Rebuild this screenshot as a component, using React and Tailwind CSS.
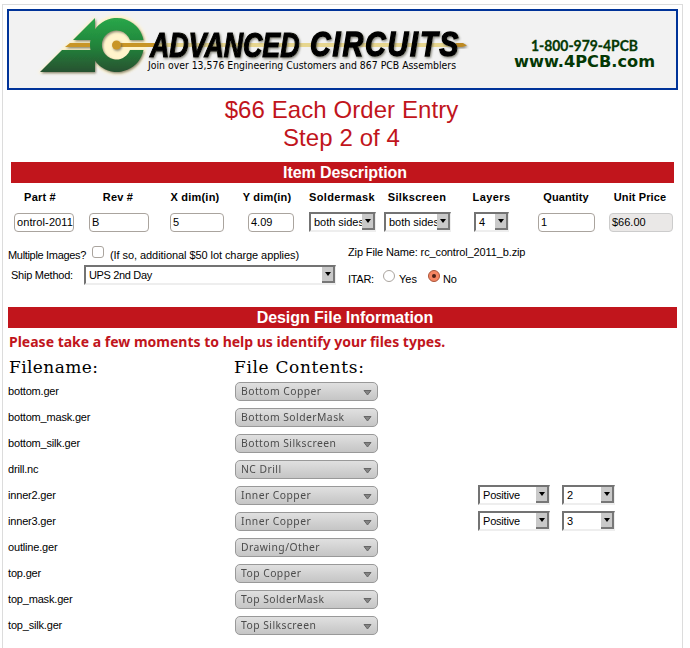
import React from "react";

const SANS = "font-['Liberation_Sans',Arial,sans-serif]";

const headings = [
  ["Part #", "w-[74px]"],
  ["Rev #", "w-[82px]"],
  ["X dim(in)", "w-[72px]"],
  ["Y dim(in)", "w-[72px]"],
  ["Soldermask", "w-[78px] tracking-[0.35px]"],
  ["Silkscreen", "w-[72px] tracking-[0.35px]"],
  ["Layers", "w-[77px] tracking-[0.4px]"],
  ["Quantity", "w-[72px] tracking-[0.1px]"],
  ["Unit Price", "w-[76px] tracking-[0.1px]"],
];

const files = [
  ["bottom.ger", "Bottom Copper"],
  ["bottom_mask.ger", "Bottom SolderMask"],
  ["bottom_silk.ger", "Bottom Silkscreen"],
  ["drill.nc", "NC Drill"],
  ["inner2.ger", "Inner Copper", "2"],
  ["inner3.ger", "Inner Copper", "3"],
  ["outline.ger", "Drawing/Other"],
  ["top.ger", "Top Copper"],
  ["top_mask.ger", "Top SolderMask"],
  ["top_silk.ger", "Top Silkscreen"],
];

function Logo() {
  return (
    <svg width="667" height="77" viewBox="9 11 667 77" className="block">
      <defs>
        <linearGradient id="green" x1="0" y1="17" x2="0" y2="73" gradientUnits="userSpaceOnUse">
          <stop offset="0" stopColor="#2aa84a" />
          <stop offset="0.5" stopColor="#21853b" />
          <stop offset="1" stopColor="#285030" />
        </linearGradient>
        <filter id="soft" x="-20%" y="-20%" width="140%" height="150%">
          <feGaussianBlur stdDeviation="1.6" />
        </filter>
        <filter id="shade" x="-10%" y="-20%" width="120%" height="150%">
          <feDropShadow dx="1" dy="1.3" stdDeviation="0.8" floodColor="#555544" floodOpacity="0.7" />
        </filter>
      </defs>
      <g fill="#fff4cc" filter="url(#soft)">
        <path d="M71 41 L95 16 V73 H38 L65 46Z" />
        <circle cx="117" cy="45" r="29.500" />
      </g>
      <path d="M117 43 H155 V47 H117Z" fill="#c89527" />
      <g filter="url(#shade)">
        <path d="M73 40 L95 18 V40Z M62 50 H95 V72 H40Z" fill="url(#green)" />
        <path d="M65 47 L70 43 H91 V47Z" fill="#c89527" />
        <path
          d="M143.500 40 A27 27 0 1 0 143.500 50 H130 A14.500 14.500 0 1 1 130 40Z"
          fill="url(#green)"
        />
        <circle cx="116.500" cy="45" r="4.500" fill="#c89527" />
      </g>
      <path d="M155 43 H459 V47 H155Z" fill="#e7d68f" />
      <path d="M456 43 H463 L467 45.500 L462 47 H456Z" fill="#bd8a20" filter="url(#shade)" />
      <g
        fontFamily="'Liberation Sans Narrow','Liberation Sans',Arial,sans-serif"
        fontWeight="700"
        fontStyle="italic"
        stroke="#000"
        filter="url(#shade)"
      >
        <text transform="translate(150 57) scale(0.74 1)" fontSize="35" strokeWidth="1.200" textLength="202" lengthAdjust="spacingAndGlyphs">ADVANCED</text>
        <text transform="translate(310 56) scale(0.82 1)" fontSize="35" strokeWidth="1.400" textLength="181" lengthAdjust="spacing">CIRCUITS</text>
      </g>
      <text x="148" y="69" fontSize="10" fontFamily="'DejaVu Sans',Verdana,sans-serif" textLength="308" lengthAdjust="spacingAndGlyphs">
        Join over 13,576 Engineering Customers and 867 PCB Assemblers
      </text>
      <text x="531" y="51" fontSize="15" fontWeight="700" fill="#043804" stroke="#043804" strokeWidth="0.300" fontFamily="Lato,sans-serif" textLength="107" lengthAdjust="spacingAndGlyphs">
        1-800-979-4PCB
      </text>
      <text x="514" y="67" fontSize="15" fontWeight="700" fill="#043804" fontFamily="'DejaVu Sans',Verdana,sans-serif" textLength="141" lengthAdjust="spacingAndGlyphs">
        www.4PCB.com
      </text>
    </svg>
  );
}

function TextBox({ children, className, tone = "border-[#aaa49e] bg-white" }) {
  return (
    <div className={`flex h-[19px] items-center overflow-hidden rounded-[4px] border px-[2px] whitespace-nowrap ${tone} ${className}`}>
      {children}
    </div>
  );
}

function Select({ children, className }) {
  return (
    <div className={`flex h-5 border-t-2 border-r border-b-2 border-l-2 border-t-[#737373] border-r-[#eee] border-b-[#eee] border-l-[#737373] bg-white ${className}`}>
      <div className="min-w-0 flex-1 overflow-hidden pl-[3px] leading-[16px] whitespace-nowrap">{children}</div>
      <div className="flex h-4 w-[13px] shrink-0 items-center justify-center border-r-2 border-b-2 border-[#777] bg-[#c9c9c9]">
        <svg width="6" height="4" viewBox="0 0 6 4">
          <path d="M0 0H6L3 4Z" fill="#000" />
        </svg>
      </div>
    </div>
  );
}

function PillSelect({ children }) {
  return (
    <div className="flex h-[19px] w-[143px] items-center justify-between rounded-[5px] border border-[#999] bg-linear-to-b from-[#e0e0e0] to-[#c5c5c5] pr-[5px] pl-[5px] font-['Noto_Sans','Open_Sans',sans-serif] text-[11.5px] text-[#4c4c4c]">
      <span className="origin-left scale-x-[0.9] tracking-[0.5px] whitespace-nowrap">{children}</span>
      <svg width="9" height="6" viewBox="0 0 9 6" className="mt-[3px] shrink-0">
        <path d="M1 0.500H8L4.500 5Z" fill="#858585" stroke="#666" />
      </svg>
    </div>
  );
}

function Bar({ children, className }) {
  return (
    <div className={`h-[21px] bg-[#c1151c] text-center text-[16px] leading-[21px] font-bold text-white ${className}`}>
      {children}
    </div>
  );
}

export default function App() {
  return (
    <div className={`h-[648px] w-[690px] overflow-hidden bg-white pt-1 pl-[2px] text-[11px] text-black ${SANS}`}>
      <div className="h-[660px] w-[681px] border border-[#dcdcdc]">
        <div className="mt-1 ml-1 h-[81px] w-[671px] border-2 border-[#003399] bg-[#f2f2f2]">
          <Logo />
        </div>

        <div className="mt-[6px] w-[677px] text-center text-[24px] leading-[28px] tracking-[0.08px] text-[#c1151c]">
          <div>$66 Each Order Entry</div>
          <div>Step 2 of 4</div>
        </div>

        <Bar className="mt-[10px] ml-2 w-[663px] pl-[5px] tracking-[-0.1px]">Item Description</Bar>

        <div className="mt-[7px] flex h-[15px] leading-[15px] font-bold tracking-[0.2px]">
          {headings.map(([label, width]) => (
            <div key={label} className={`shrink-0 text-center whitespace-nowrap ${width}`}>{label}</div>
          ))}
        </div>

        <div className="mt-[7px] flex h-5 items-end pl-[11px]">
          <TextBox className="w-[60px] tracking-[0.1px]">ontrol-2011</TextBox>
          <TextBox className="ml-[15px] w-[60px]">B</TextBox>
          <TextBox className="ml-[21px] w-[54px]">5</TextBox>
          <TextBox className="ml-6 w-[46px]">4.09</TextBox>
          <Select className="ml-[15px] w-[67px] tracking-[-0.02px]">both sides</Select>
          <Select className="ml-2 w-[67px] tracking-[-0.02px]">both sides</Select>
          <Select className="ml-[23px] w-[35px]">4</Select>
          <TextBox className="ml-[29px] w-[57px]">1</TextBox>
          <TextBox className="ml-[14px] w-[64px]" tone="border-[#ccc] bg-[#eae8e7]">$66.00</TextBox>
        </div>

        <div className="mt-[13px] flex pl-[5px]">
          <div className="w-[340px]">
            <div className="flex h-5 items-start leading-[20px]">
              <span className="w-[78px] tracking-[-0.32px] whitespace-nowrap">Multiple Images?</span>
              <span className="mt-px ml-[6px] h-3 w-3 rounded-[3px] border border-[#aaa49e] bg-white" />
              <span className="ml-[6px] tracking-[-0.07px]">(If so, additional $50 lot charge applies)</span>
            </div>
            <div className="flex items-center pl-[3px]">
              <span className="w-[73px] tracking-[-0.25px]">Ship Method:</span>
              <Select className="w-[252px] tracking-[-0.35px]">UPS 2nd Day</Select>
            </div>
          </div>
          <div>
            <div className="h-[23px] leading-[14px] tracking-[-0.13px]">Zip File Name: rc_control_2011_b.zip</div>
            <div className="flex h-4 items-start leading-[22px]">
              <span className="w-[35px] tracking-[-0.3px]">ITAR:</span>
              <span className="mt-[2px] h-3 w-3 rounded-full border border-[#aaa49e]" />
              <span className="ml-1 w-[29px]">Yes</span>
              <span className="mt-[2px] flex h-3 w-3 items-center justify-center rounded-full border border-[#aa553a] bg-[#f58663]">
                <span className="size-1 rounded-full bg-[#4b2015]" />
              </span>
              <span className="ml-[3px] tracking-[-0.3px]">No</span>
            </div>
          </div>
        </div>

        <Bar className="mt-[22px] ml-[5px] w-[669px] pl-[5px] tracking-[-0.05px]">Design File Information</Bar>

        <div className="mt-[4px] ml-[6px] h-5 font-['Noto_Sans','Open_Sans',sans-serif] text-[14px] leading-5 font-bold whitespace-nowrap text-[#c1151c]">
          Please take a few moments to help us identify your files types.
        </div>

        <div className="mt-[4px] ml-[6px] flex h-[22px] font-['DejaVu_Serif',serif] text-[17px] leading-[22px]">
          <div className="w-[225px] tracking-[0.4px]">Filename:</div>
          <div className="tracking-[0.65px]">File Contents:</div>
        </div>

        <div className="ml-[5px]">
          {files.map(([name, type, layer]) => (
            <div key={name} className="flex h-[26px] items-center">
              <div className="w-[227px] tracking-[-0.18px]">{name}</div>
              <PillSelect>{type}</PillSelect>
              {layer && (
                <div className="ml-[100px] flex gap-3">
                  <Select className="w-[72px] tracking-[-0.2px]">Positive</Select>
                  <Select className="w-[53px]">{layer}</Select>
                </div>
              )}
            </div>
          ))}
        </div>
      </div>
    </div>
  );
}
